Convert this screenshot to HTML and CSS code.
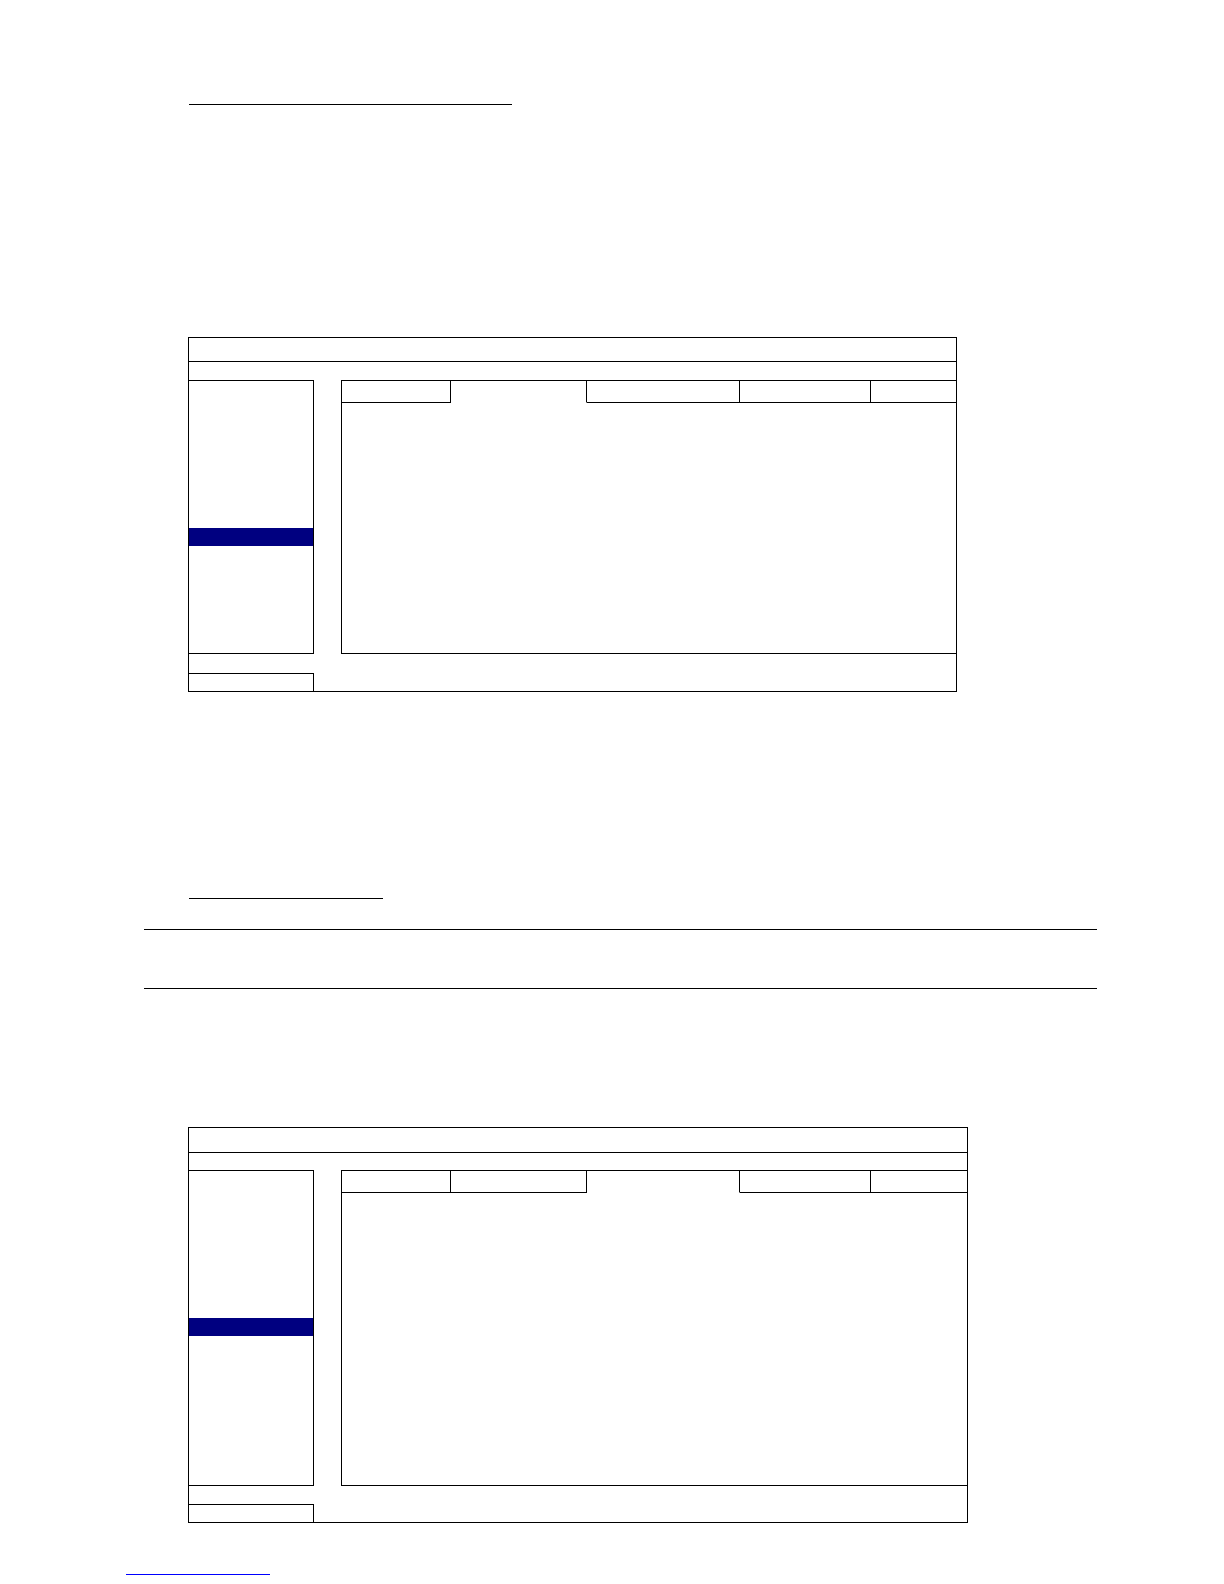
FILE: index.html
```html
<!DOCTYPE html>
<html lang="en">
<head>
<meta charset="utf-8">
<title>Menu screens</title>
<link rel="stylesheet" href="styles.css">
</head>
<body>
<div class="page">
  <div class="rule rule-head1"></div>

  <div class="win win-a">
    <div class="win-title"></div>
    <div class="win-menu"></div>
    <div class="win-main">
      <div class="sidebar">
        <div class="side-item is-selected"></div>
      </div>
      <div class="panel">
        <div class="tabs">
          <div class="tab tab-1"></div>
          <div class="tab tab-2 is-active"></div>
          <div class="tab tab-3"></div>
          <div class="tab tab-4"></div>
          <div class="tab tab-5"></div>
        </div>
        <div class="panel-body"></div>
      </div>
    </div>
    <div class="win-footer">
      <div class="footer-btn"></div>
    </div>
  </div>

  <div class="rule rule-head2"></div>
  <div class="rule rule-note-top"></div>
  <div class="rule rule-note-bottom"></div>

  <div class="win win-b">
    <div class="win-title"></div>
    <div class="win-menu"></div>
    <div class="win-main">
      <div class="sidebar">
        <div class="side-item is-selected"></div>
      </div>
      <div class="panel">
        <div class="tabs">
          <div class="tab tab-1"></div>
          <div class="tab tab-2"></div>
          <div class="tab tab-3 is-active"></div>
          <div class="tab tab-4"></div>
          <div class="tab tab-5"></div>
        </div>
        <div class="panel-body"></div>
      </div>
    </div>
    <div class="win-footer">
      <div class="footer-btn"></div>
    </div>
  </div>

  <div class="rule rule-link"></div>
</div>
</body>
</html>
```

FILE: styles.css
```css
html, body {
  margin: 0;
  padding: 0;
  background: #ffffff;
  font-family: "Liberation Sans", Arial, sans-serif;
}

.page {
  width: 1224px;
  padding-top: 1px;
  padding-bottom: 8px;
}

.rule {
  height: 0;
  border-top: 1px solid #000;
}

.rule-head1 {
  margin-top: 103px;
  margin-left: 189px;
  width: 323px;
}

.rule-head2 {
  margin-top: 206px;
  margin-left: 189px;
  width: 194px;
}

.rule-note-top {
  margin-top: 30px;
  margin-left: 144px;
  width: 953px;
}

.rule-note-bottom {
  margin-top: 58px;
  margin-left: 144px;
  width: 953px;
}

.rule-link {
  margin-top: 51px;
  margin-left: 126px;
  width: 144px;
  border-top-color: #0000ff;
}

/* window frame */
.win {
  box-sizing: border-box;
  margin-left: 188px;
  border: 1px solid #000;
  display: flex;
  flex-direction: column;
}

.win-a {
  margin-top: 232px;
  width: 769px;
}

.win-b {
  margin-top: 138px;
  width: 780px;
}

.win-title {
  border-bottom: 1px solid #000;
}

.win-a .win-title { height: 23px; }
.win-b .win-title { height: 24px; }
.win-a .win-menu { height: 18px; }
.win-b .win-menu { height: 17px; }

.win-main {
  display: flex;
}

.sidebar {
  box-sizing: border-box;
  width: 125px;
  border-top: 1px solid #000;
  border-right: 1px solid #000;
  border-bottom: 1px solid #000;
}

.win-a .sidebar, .win-a .panel { height: 274px; }
.win-b .sidebar, .win-b .panel { height: 316px; }

.side-item {
  height: 18px;
}

.side-item.is-selected {
  margin-top: 147px;
  background: #000080;
}

.panel {
  box-sizing: border-box;
  flex: 1;
  margin-left: 27px;
  border-left: 1px solid #000;
  border-bottom: 1px solid #000;
  display: flex;
  flex-direction: column;
}

.tabs {
  display: flex;
}

.tab {
  box-sizing: border-box;
  height: 23px;
  border-top: 1px solid #000;
  border-bottom: 1px solid #000;
  border-right: 1px solid #000;
}

.tab.is-active {
  border-bottom-color: transparent;
}

.tab-1 { width: 109px; }
.tab-2 { width: 136px; }
.tab-3 { width: 153px; }
.tab-4 { width: 131px; }
.tab-5 { flex: 1; border-right: none; }

.panel-body {
  flex: 1;
}

.win-footer {
  display: flex;
  flex-direction: column;
}

.win-a .win-footer { height: 37px; }
.win-b .win-footer { height: 36px; }

.footer-btn {
  box-sizing: border-box;
  width: 125px;
  height: 18px;
  border-top: 1px solid #000;
  border-right: 1px solid #000;
}

.win-a .footer-btn { margin-top: 19px; }
.win-b .footer-btn { margin-top: 18px; }
```
